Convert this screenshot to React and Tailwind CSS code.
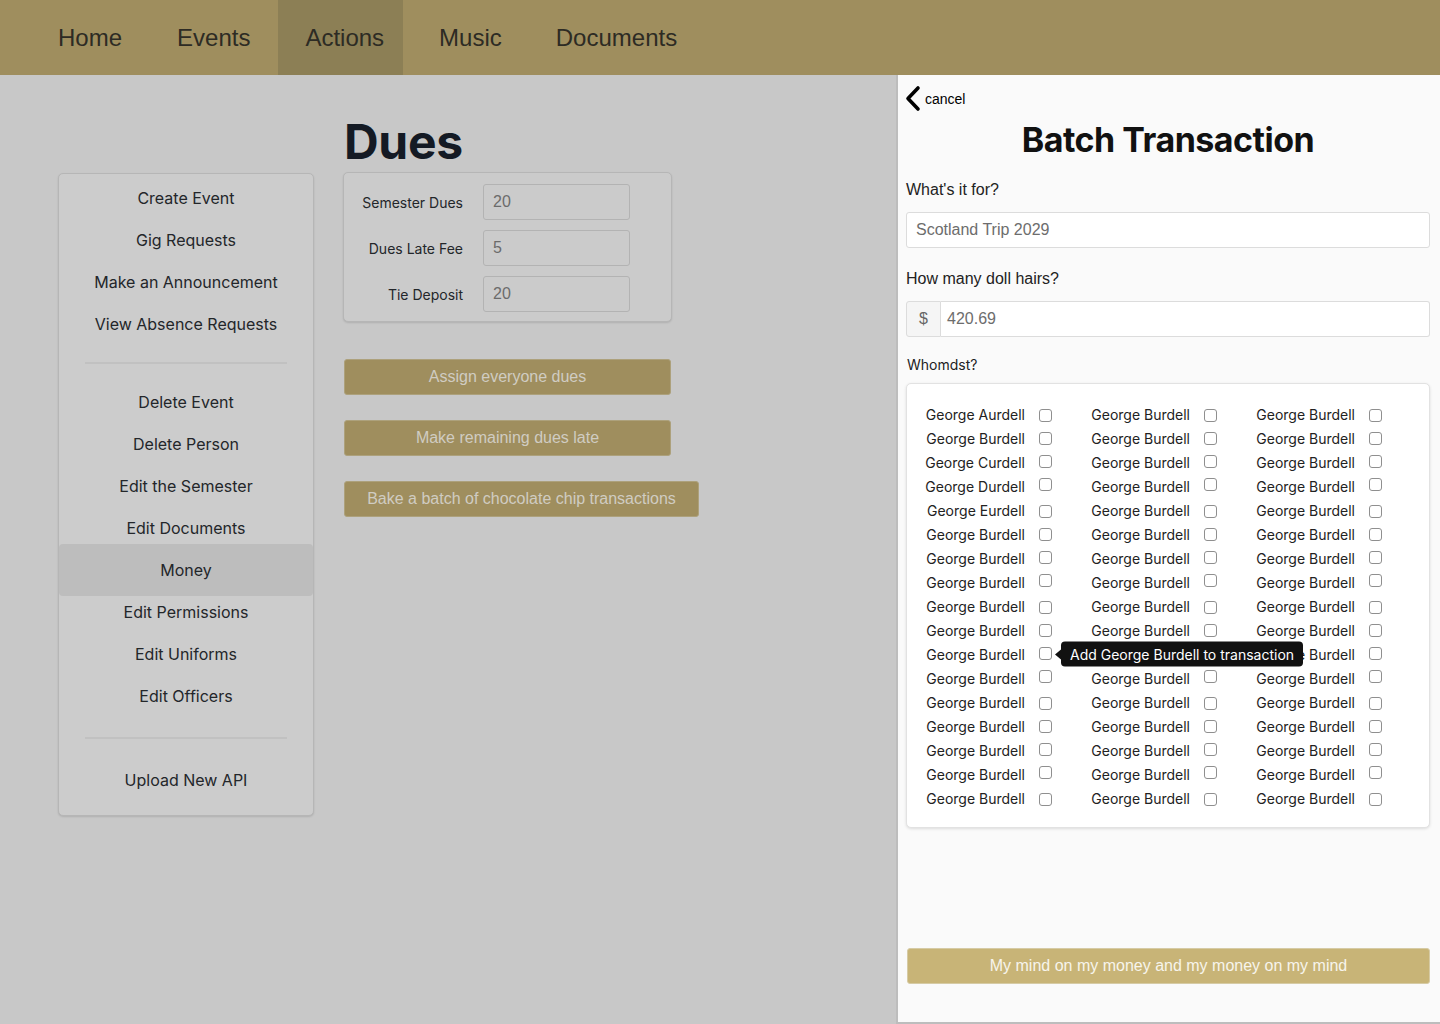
const navItems = ["Home", "Events", "Actions", "Music", "Documents"];

const sideGroups = [
  ["Create Event", "Gig Requests", "Make an Announcement", "View Absence Requests"],
  ["Delete Event", "Delete Person", "Edit the Semester", "Edit Documents", "Money", "Edit Permissions", "Edit Uniforms", "Edit Officers"],
  ["Upload New API"],
];

const dues = [
  ["Semester Dues", "20"],
  ["Dues Late Fee", "5"],
  ["Tie Deposit", "20"],
];

const col1 = ["George Aurdell", "George Burdell", "George Curdell", "George Durdell", "George Eurdell"];
const rows = Array.from({ length: 17 }, (_, i) => i);
const nudge = ["translate-y-[1px]", "", "-translate-y-[1px]", "-translate-y-[2px]"];

function Checkbox({ row }) {
  return (
    <span
      className={`block w-[13px] h-[13px] rounded-[3px] border border-[#8f8f8f] bg-white ${nudge[row % 4]}`}
    />
  );
}

function Person({ name, row, tip }) {
  return (
    <div className="flex items-center w-[165px] h-6">
      <span className="w-[110px] text-right text-[14px] text-[#222]">{name}</span>
      <span className="relative ml-[14px]">
        <Checkbox row={row} />
        {tip && (
          <span className="absolute left-[16px] top-1/2 -translate-y-1/2 flex items-center z-10">
            <span className="w-0 h-0 border-y-[5px] border-y-transparent border-r-[6px] border-r-[#111]" />
            <span className="whitespace-nowrap bg-[#111] text-white text-[14px] rounded px-[9px] h-[25px] leading-[25px]">
              Add George Burdell to transaction
            </span>
          </span>
        )}
      </span>
    </div>
  );
}

export default function App() {
  return (
    <div className="w-[1440px] h-[1024px] bg-[#c8c8c8] flex flex-col overflow-hidden font-['Inter',sans-serif]">
      {/* top nav */}
      <div className="h-[75px] bg-[#9f8e5e] flex pl-[31px] font-['Liberation_Sans',Arial,sans-serif] text-[24px] text-[#2d2b24]">
        {navItems.map((n) =>
          n === "Actions" ? (
            <div key={n} className="ml-[1px] pl-[27px] pr-[19px] flex items-center bg-[#8c7f55]">{n}</div>
          ) : (
            <div key={n} className={`px-[27px] flex items-center ${n === "Music" ? "ml-[9px]" : ""} ${n === "Events" ? "ml-[1px]" : ""}`}>{n}</div>
          )
        )}
      </div>

      <div className="flex-1 flex">
        {/* dimmed page */}
        <div className="w-[896px] flex pl-[58px]">
          <div className="mt-[98px] w-[256px] h-[643px] bg-[#cccccc] border border-[#b6b6b6] rounded-[5px] shadow-[0_1px_2px_rgba(0,0,0,0.12)] pt-[3px] text-[16px] text-[#23262a]">
            {sideGroups.map((g, gi) => (
              <div key={gi}>
                {gi > 0 && (
                  <div className={`${gi === 1 ? "h-9" : "h-[42px]"} flex items-center justify-center`}>
                    <div className="w-[202px] h-[2px] bg-[#c1c1c1]" />
                  </div>
                )}
                {g.map((item) =>
                  item === "Money" ? (
                    <div key={item} className="h-[52px] -my-[5px] relative flex items-center justify-center bg-[#bdbdbd] rounded-[4px]">
                      {item}
                    </div>
                  ) : (
                    <div key={item} className="h-[42px] flex items-center justify-center">{item}</div>
                  )
                )}
              </div>
            ))}
          </div>

          <div className="ml-[29px] flex flex-col">
            <h1 className="mt-[43px] ml-[1px] text-[48px] leading-[48px] font-bold text-[#141a24] tracking-[-0.3px]">Dues</h1>
            <div className="mt-[6px] w-[329px] h-[150px] bg-[#cbcbcb] border border-[#b6b6b6] rounded-[5px] shadow-[0_1px_2px_rgba(0,0,0,0.12)] pt-[11px] pl-[9px] flex flex-col gap-[10px]">
              {dues.map(([l, v]) => (
                <div key={l} className="flex items-center">
                  <span className="w-[110px] text-right text-[14px] text-[#23262a] whitespace-nowrap">{l}</span>
                  <div className="ml-[20px] w-[147px] h-[36px] border border-[#b3b3b3] rounded-[3px] bg-[#cbcbcb] flex items-center pl-[9px] font-['Liberation_Sans',Arial,sans-serif] text-[16px] text-[#6b6b6b]">
                    {v}
                  </div>
                </div>
              ))}
            </div>
            <div className="mt-[37px] flex flex-col gap-[25px] font-['Liberation_Sans',Arial,sans-serif] text-[16px] text-[#d0ccc2]">
              <button className="w-[327px] h-[36px] bg-[#9f8e5e] border border-[#ada17c] rounded-[3px] ml-[1px]">Assign everyone dues</button>
              <button className="w-[327px] h-[36px] bg-[#9f8e5e] border border-[#ada17c] rounded-[3px] ml-[1px]">Make remaining dues late</button>
              <button className="w-[355px] h-[36px] bg-[#9f8e5e] border border-[#ada17c] rounded-[3px] ml-[1px]">Bake a batch of chocolate chip transactions</button>
            </div>
          </div>
        </div>

        {/* side panel */}
        <div className="w-[544px] bg-[#fafafa] border-l-2 border-b-2 border-[#bdbdbd] pl-[8px] pr-[10px] flex flex-col">
          <div className="mt-[10px] flex items-center h-[28px]">
            <svg width="18" height="28" viewBox="0 0 18 28" className="-ml-[2px]">
              <polyline points="14,3 4,13.5 14,24" fill="none" stroke="#000" strokeWidth="3.6" strokeLinecap="round" strokeLinejoin="round" />
            </svg>
            <span className="ml-[3px] text-[14px] text-black font-['Liberation_Sans',Arial,sans-serif]">cancel</span>
          </div>
          <h2 className="mt-[7px] text-center text-[34px] leading-[40px] font-bold text-[#111] tracking-[-0.5px]">Batch Transaction</h2>
          <div className="mt-[19px] font-['Liberation_Sans',Arial,sans-serif] text-[16px] text-[#222] leading-[22px]">What's it for?</div>
          <div className="mt-[11px] h-[36px] bg-white border border-[#dcdcdc] rounded-[3px] flex items-center pl-[9px] font-['Liberation_Sans',Arial,sans-serif] text-[16px] text-[#6d6d6d]">
            Scotland Trip 2029
          </div>
          <div className="mt-[20px] font-['Liberation_Sans',Arial,sans-serif] text-[16px] text-[#222] leading-[22px]">How many doll hairs?</div>
          <div className="mt-[11px] h-[36px] flex font-['Liberation_Sans',Arial,sans-serif] text-[16px]">
            <div className="w-[35px] bg-[#f5f5f5] border border-[#dcdcdc] rounded-l-[3px] flex items-center justify-center text-[#666]">$</div>
            <div className="flex-1 bg-white border border-l-0 border-[#dcdcdc] rounded-r-[3px] flex items-center pl-[6px] text-[#6d6d6d]">420.69</div>
          </div>
          <div className="mt-[18px] text-[14px] text-[#222] leading-[20px] ml-[1px]">Whomdst?</div>
          <div className="mt-[8px] h-[445px] bg-white border border-[#e2e2e2] rounded-[5px] shadow-[0_1px_3px_rgba(0,0,0,0.12)] pt-[18px] pl-[8px]">
            {rows.map((r) => (
              <div key={r} className="flex">
                <Person name={r < 5 ? col1[r] : "George Burdell"} row={r} tip={r === 10} />
                <Person name="George Burdell" row={r} />
                <Person name="George Burdell" row={r} />
              </div>
            ))}
          </div>
          <button className="mt-[120px] ml-[1px] h-[36px] bg-[#c8b477] border border-[#d6cba5] rounded-[3px] font-['Liberation_Sans',Arial,sans-serif] text-[16px] text-[#f7f4ec]">
            My mind on my money and my money on my mind
          </button>
        </div>
      </div>
    </div>
  );
}
